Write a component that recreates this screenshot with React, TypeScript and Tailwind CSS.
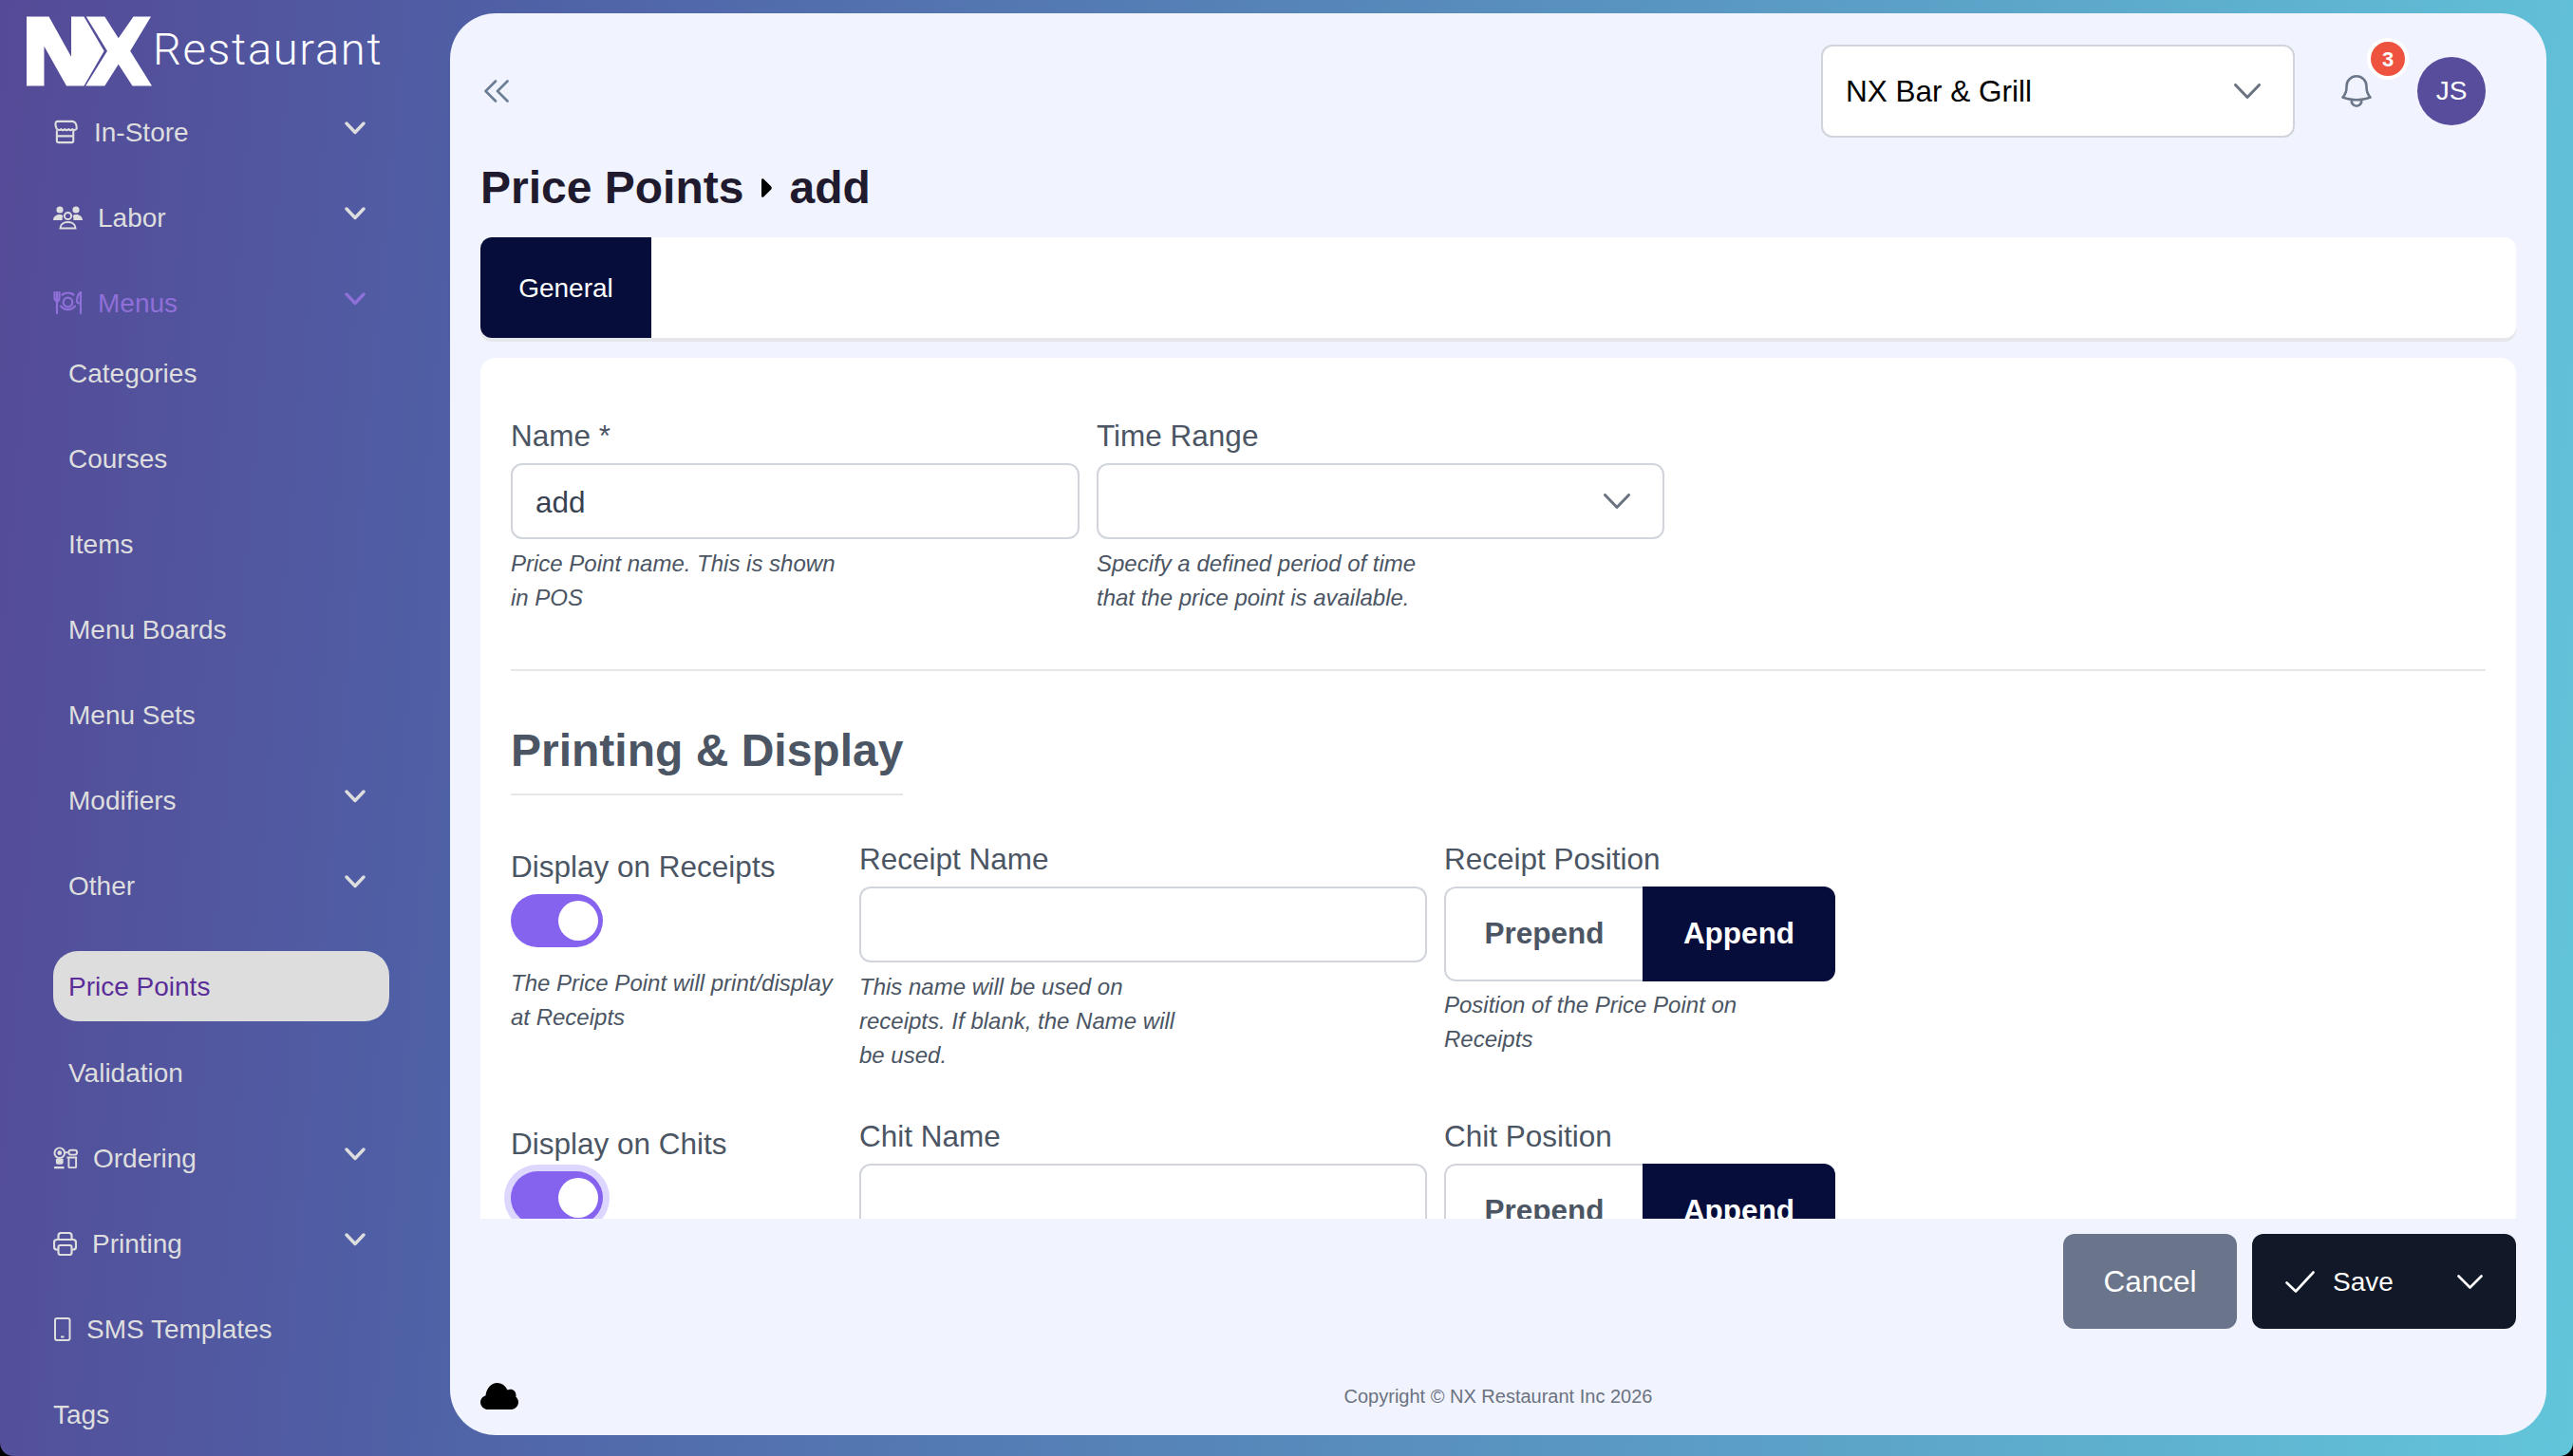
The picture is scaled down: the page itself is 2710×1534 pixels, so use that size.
import React from 'react';

function Chevron({ className }: { className: string }) {
  return (
    <svg viewBox="0 0 22 14" className={className} fill="none" stroke="currentColor" strokeWidth="3.4" strokeLinecap="round" strokeLinejoin="round">
      <path d="M2 2l9 9.5L20 2" />
    </svg>
  );
}

function SelectChevron() {
  return (
    <svg viewBox="0 0 28 16" className="h-[16px] w-[28px] text-[#6b7280]" fill="none" stroke="currentColor" strokeWidth="3" strokeLinecap="round" strokeLinejoin="round">
      <path d="M1.5 1.5L14 14.5 26.5 1.5" />
    </svg>
  );
}

function StoreIcon() {
  return (
    <svg viewBox="0 0 29 26" className="-mr-[1px] h-[26px] w-[28px]" fill="none" stroke="currentColor" strokeWidth="2.2" strokeLinejoin="round" strokeLinecap="round">
      <path d="M5 1.5h16c3 0 4.8 3 4.6 8-1.6 1.8-3.4 1.8-4.4.4-1.3 1.5-3 1.5-4.1 0-1.2 1.5-3.1 1.5-4.2 0-1.2 1.5-3 1.5-4.1 0-1.2 1.5-3.4 1.3-5-.4C1.6 5 2.4 1.5 5 1.5z" />
      <path d="M4 12v10.5a2 2 0 0 0 2 2h14a2 2 0 0 0 2-2V12M4 17.5h18" />
    </svg>
  );
}

function LaborIcon() {
  return (
    <svg viewBox="0 0 31 25" className="h-[25px] w-[31px]" fill="currentColor">
      <circle cx="7" cy="4" r="3.6" />
      <circle cx="24" cy="4" r="3.6" />
      <path d="M0 15c0-3.6 3-6 6.6-6 1.6 0 2.8.4 3.8 1.2a7 7 0 0 0-.6 4.8H0zM31 15c0-3.6-3-6-6.6-6-1.6 0-2.8.4-3.8 1.2a7 7 0 0 1 .6 4.8H31z" />
      <g fill="none" stroke="currentColor" strokeWidth="2">
        <circle cx="15.5" cy="10.5" r="3.6" />
        <path d="M7.5 23.5c0-4 3.4-6.5 8-6.5s8 2.500 8 6.500z" />
      </g>
    </svg>
  );
}

function MenusIcon() {
  return (
    <svg viewBox="0 0 31 24" className="h-[24px] w-[31px]" fill="none" stroke="currentColor" strokeWidth="2.2" strokeLinecap="round">
      <path d="M1.500 1v6c0 2 1 3 2.500 3.500S6.500 9 6.500 7V1M4 1v22" />
      <circle cx="15.500" cy="11.500" r="4.800" />
      <path d="M9.500 3.500a10 10 0 0 1 12 0M8 15.500a9.500 9.500 0 0 0 15 0" />
      <path d="M29 23V1c-2.500 1.500-4 5-4 9.500 0 1 .8 2 4 2" />
    </svg>
  );
}

function OrderingIcon() {
  return (
    <svg viewBox="0 0 28 24" className="-mr-[1px] h-[24px] w-[27px]" fill="none" stroke="currentColor" strokeWidth="2">
      <circle cx="7" cy="6.500" r="5.500" />
      <circle cx="7" cy="6.500" r="2.500" fill="currentColor" stroke="none" />
      <path d="M12.500 6h4" />
      <rect x="17" y="3.500" width="9" height="5" rx="2.500" />
      <path d="M15 11.500h11M17 12v9.500a1 1 0 0 0 1 1h6a1 1 0 0 0 1-1V12" />
      <path d="M3 13h8v4a2 2 0 0 1-2 2H5a2 2 0 0 1-2-2z" fill="currentColor" stroke="none" />
      <path d="M1 22.500h11" strokeWidth="2.400" />
    </svg>
  );
}

function PrinterIcon() {
  return (
    <svg viewBox="0 0 25 25" className="h-[25px] w-[25px]" fill="none" stroke="currentColor" strokeWidth="2.200" strokeLinejoin="round">
      <path d="M5.500 8V4a3 3 0 0 1 3-3h8a3 3 0 0 1 3 3v4" />
      <path d="M5.500 18.500H4a3 3 0 0 1-3-3v-4.500a3 3 0 0 1 3-3h17a3 3 0 0 1 3 3v4.500a3 3 0 0 1-3 3h-1.500" />
      <rect x="5.500" y="14" width="14" height="10" rx="2" />
    </svg>
  );
}

function PhoneIcon() {
  return (
    <svg viewBox="0 0 19 25" className="h-[25px] w-[19px]" fill="none" stroke="currentColor" strokeWidth="2">
      <rect x="2" y="1" width="15.500" height="23" rx="2" />
      <path d="M8 20.500h3.500" />
    </svg>
  );
}

function NavRow({ label, icon, open, tone }: { label: string; icon?: React.ReactNode; open?: boolean; tone?: string }) {
  return (
    <div className={`flex h-[90px] w-[385px] items-center pl-[56px] text-[28px] ${tone ?? 'text-[#dedede]'}`}>
      {icon && <span className="mr-[16px] flex shrink-0 items-center">{icon}</span>}
      <span className="pt-[1px]">{label}</span>
      {open && <Chevron className="ml-auto -mt-[8px] h-[14px] w-[22px]" />}
    </div>
  );
}

function SubRow({ label, arrow }: { label: string; arrow?: boolean }) {
  return (
    <div className="flex h-[90px] w-[385px] items-center pl-[72px] text-[28px] text-[#dedede]">
      <span className="pt-[1px]">{label}</span>
      {arrow && <Chevron className="ml-auto -mt-[8px] h-[14px] w-[22px]" />}
    </div>
  );
}

function Sidebar() {
  return (
    <aside className="w-[474px] shrink-0 overflow-hidden">
      <div className="flex h-[94px] items-start pl-[28px] pt-[17px]">
        <svg viewBox="25 22 393 218" className="h-[74px] w-[132px]" fill="#ffffff">
          <polygon points="25,22 95,22 165,148 165,22 205,22 268,130 205,240 150,240 80,115 80,240 25,240" />
          <polygon points="212,22 270,22 313,90 360,22 415,22 350,130 418,240 357,240 313,172 270,240 210,240 278,130" />
        </svg>
        <span className="ml-[1px] font-['Roboto'] text-[47px] font-light leading-[70px] tracking-[1.7px] text-white">Restaurant</span>
      </div>
      <NavRow label="In-Store" icon={<StoreIcon />} open />
      <NavRow label="Labor" icon={<LaborIcon />} open />
      <NavRow label="Menus" icon={<MenusIcon />} open tone="text-[#8f6fd8]" />
      <div className="-mt-[16px]">
        <SubRow label="Categories" />
        <SubRow label="Courses" />
        <SubRow label="Items" />
        <SubRow label="Menu Boards" />
        <SubRow label="Menu Sets" />
        <SubRow label="Modifiers" arrow />
        <SubRow label="Other" arrow />
      </div>
      <div className="ml-[56px] mt-[24px] mb-[9px] flex h-[74px] w-[354px] items-center rounded-[26px] bg-[#dddddd] pl-[16px] pt-[1px] text-[28px] text-[#5a2d98]">
        Price Points
      </div>
      <SubRow label="Validation" />
      <NavRow label="Ordering" icon={<OrderingIcon />} open />
      <NavRow label="Printing" icon={<PrinterIcon />} open />
      <NavRow label="SMS Templates" icon={<PhoneIcon />} />
      <NavRow label="Tags" />
    </aside>
  );
}

function Label({ children, className }: { children: React.ReactNode; className?: string }) {
  return <label className={`mb-[4px] block text-[31.5px] leading-[49px] text-[#4b5563] ${className ?? ''}`}>{children}</label>;
}

function Help({ children, className }: { children: React.ReactNode; className?: string }) {
  return <p className={`max-w-[350px] text-[24px] italic leading-[36px] text-[#4b5563] ${className ?? ''}`}>{children}</p>;
}

function TextInput({ value }: { value?: string }) {
  return (
    <input
      readOnly
      value={value ?? ''}
      className="block h-[80px] w-full rounded-[12px] border-2 border-[#d1d5db] bg-white px-[24px] pt-[2px] text-[31.5px] text-[#374151] outline-none"
    />
  );
}

function Segment() {
  return (
    <div className="flex h-[100px] w-[412px] overflow-hidden rounded-[12px] text-[31.5px] font-bold">
      <div className="flex w-[209px] items-center justify-center rounded-l-[12px] border-2 border-r-0 border-[#d1d5db] bg-white text-[#4b5563]">Prepend</div>
      <div className="flex flex-1 items-center justify-center bg-[#060d3b] text-white">Append</div>
    </div>
  );
}

function Toggle({ focused }: { focused?: boolean }) {
  return (
    <div className={`flex h-[56px] w-[97px] items-center justify-end rounded-full bg-[#8563ef] pr-[5px] ${focused ? 'ring-[7px] ring-[#ddd6fe]' : ''}`}>
      <div className="h-[42px] w-[42px] rounded-full bg-white" />
    </div>
  );
}

function Header() {
  return (
    <div className="mt-[33px] flex h-[98px] items-center pr-[32px]">
      <svg viewBox="0 0 26 24" className="ml-[4px] h-[24px] w-[26px] text-[#6b7d94]" fill="none" stroke="currentColor" strokeWidth="2.600" strokeLinecap="round" strokeLinejoin="round">
        <path d="M12 1.500L1.500 12 12 22.500M24.500 1.500L14 12l10.500 10.500" />
      </svg>
      <div className="ml-auto flex h-[98px] w-[499px] items-center justify-between rounded-[12px] border-2 border-[#d1d5db] bg-white pl-[24px] pr-[34px] text-[31.5px] text-black">
        <span className="pt-[2px]">NX Bar &amp; Grill</span>
        <SelectChevron />
      </div>
      <div className="relative ml-[44px] mr-[43px] h-[42px] w-[42px]">
        <svg viewBox="0 0 24 24" className="h-[42px] w-[42px] text-[#6b7688]" fill="none" stroke="currentColor" strokeWidth="1.500" strokeLinecap="round" strokeLinejoin="round">
          <path d="M14.857 17.082a23.848 23.848 0 0 0 5.454-1.31A8.967 8.967 0 0 1 18 9.75V9A6 6 0 0 0 6 9v.75a8.967 8.967 0 0 1-2.312 6.022c1.733.64 3.56 1.085 5.455 1.31m5.714 0a24.255 24.255 0 0 1-5.714 0m5.714 0a3 3 0 1 1-5.714 0" />
        </svg>
        <span className="absolute left-[32px] top-[-35px] flex h-[44px] w-[44px] items-center justify-center rounded-full border-4 border-white bg-[#ee5340] text-[22px] font-bold text-white">3</span>
      </div>
      <div className="flex h-[72px] w-[72px] items-center justify-center rounded-full bg-[#574d9c] text-[28px] text-white">JS</div>
    </div>
  );
}

function FormCard() {
  return (
    <div className="mt-[21px] h-[907px] overflow-hidden rounded-t-[16px] bg-white pl-[32px] pr-[32px] pt-[58px]">
      <div className="flex gap-[18px]">
        <div className="w-[599px]">
          <Label>Name *</Label>
          <TextInput value="add" />
          <Help className="mt-[8px]">Price Point name. This is shown in POS</Help>
        </div>
        <div className="w-[598px]">
          <Label>Time Range</Label>
          <div className="flex h-[80px] items-center justify-end rounded-[12px] border-2 border-[#d1d5db] bg-white pr-[34px]">
            <SelectChevron />
          </div>
          <Help className="mt-[8px]">Specify a defined period of time that the price point is available.</Help>
        </div>
      </div>

      <div className="mt-[57px] h-[2px] bg-[#e5e7eb]" />

      <h2 className="mt-[49px] w-fit border-b-2 border-[#e5e7eb] pb-[10px] text-[48px] font-bold leading-[70px] text-[#4b5563]">Printing &amp; Display</h2>

      <div className="mt-[43px] flex gap-[18px]">
        <div className="w-[349px] pt-[8px]">
          <Label>Display on Receipts</Label>
          <Toggle />
          <Help className="mt-[20px]">The Price Point will print/display at Receipts</Help>
        </div>
        <div className="w-[598px]">
          <Label>Receipt Name</Label>
          <TextInput />
          <Help className="mt-[8px]">This name will be used on receipts. If blank, the Name will be used.</Help>
        </div>
        <div className="w-[412px]">
          <Label>Receipt Position</Label>
          <Segment />
          <Help className="mt-[7px]">Position of the Price Point on Receipts</Help>
        </div>
      </div>

      <div className="mt-[43px] flex gap-[18px]">
        <div className="w-[349px] pt-[8px]">
          <Label>Display on Chits</Label>
          <Toggle focused />
        </div>
        <div className="w-[598px]">
          <Label>Chit Name</Label>
          <TextInput />
        </div>
        <div className="w-[412px]">
          <Label>Chit Position</Label>
          <Segment />
        </div>
      </div>
    </div>
  );
}

export default function App() {
  return (
    <div className="h-[1534px] w-[2710px] overflow-hidden bg-black font-['Liberation_Sans',sans-serif]">
      <div className="flex h-full rounded-b-[14px] bg-[linear-gradient(95deg,#554a97_0%,#4f5fa5_18%,#62c5da_100%)] pt-[14px]">
        <div className="-mt-[14px]">
          <Sidebar />
        </div>
        <main className="mb-[22px] mr-[28px] flex-1 rounded-[48px] bg-[#f1f4fe] pl-[32px] pr-[32px]">
          <Header />
          <div className="flex h-[105px] items-center text-[48px] font-bold text-[#1f1a2e]">
            <span>Price Points</span>
            <svg viewBox="0 0 12 20" className="mx-[18px] h-[20px] w-[12px]" fill="#000000">
              <path d="M1 1.500c0-1.200 1.200-1.800 2.200-1L11 8.300c1 1 1 2.400 0 3.400l-7.800 7.800c-1 .8-2.200.2-2.200-1z" />
            </svg>
            <span>add</span>
          </div>

          <div className="flex h-[106px] rounded-[12px] bg-white shadow-[0_4px_0_#e5e7eb]">
            <div className="flex w-[180px] items-center justify-center rounded-l-[12px] bg-[#060d3b] pt-[2px] text-[28px] text-white">General</div>
          </div>

          <FormCard />

          <div className="mt-[16px] flex h-[100px] justify-end gap-[16px]">
            <button className="w-[183px] rounded-[12px] bg-[#6a758b] pt-[2px] text-[31.5px] text-white">Cancel</button>
            <button className="flex w-[278px] items-center rounded-[12px] bg-[#111827] pl-[35px] pr-[35px] text-[28px] text-white">
              <svg viewBox="0 0 31 23" className="mr-[19px] h-[23px] w-[31px]" fill="none" stroke="currentColor" strokeWidth="2.600" strokeLinecap="round" strokeLinejoin="round">
                <path d="M1.500 12.500L11 21.500 29.500 1.500" />
              </svg>
              <span className="pt-[2px]">Save</span>
              <svg viewBox="0 0 27 15" className="ml-auto h-[15px] w-[27px]" fill="none" stroke="currentColor" strokeWidth="2.600" strokeLinecap="round" strokeLinejoin="round">
                <path d="M1.500 1.500L13.500 13.500 25.500 1.500" />
              </svg>
            </button>
          </div>

          <div className="relative flex h-[112px] items-center justify-center pt-[30px] text-[20px] text-[#6b7280]">
            <svg viewBox="0 0 40 28" className="absolute left-0 top-[57px] h-[28px] w-[40px]" fill="#000000">
              <path d="M8 28C3.500 28 0 24.500 0 20.500c0-3.500 2.300-6.300 5.500-7.300C6.300 5.800 11.500 0 17.500 0c5 0 9 3 11 7.500 1-.5 2-.7 3-.7 3.500 0 6 2.700 6 6.200 0 .7 0 1.300-.2 1.800 1.700 1.200 2.700 3.300 2.700 5.500 0 4-3.300 7.700-7.500 7.700z" />
            </svg>
            <span>Copyright © NX Restaurant Inc 2026</span>
          </div>
        </main>
      </div>
    </div>
  );
}
